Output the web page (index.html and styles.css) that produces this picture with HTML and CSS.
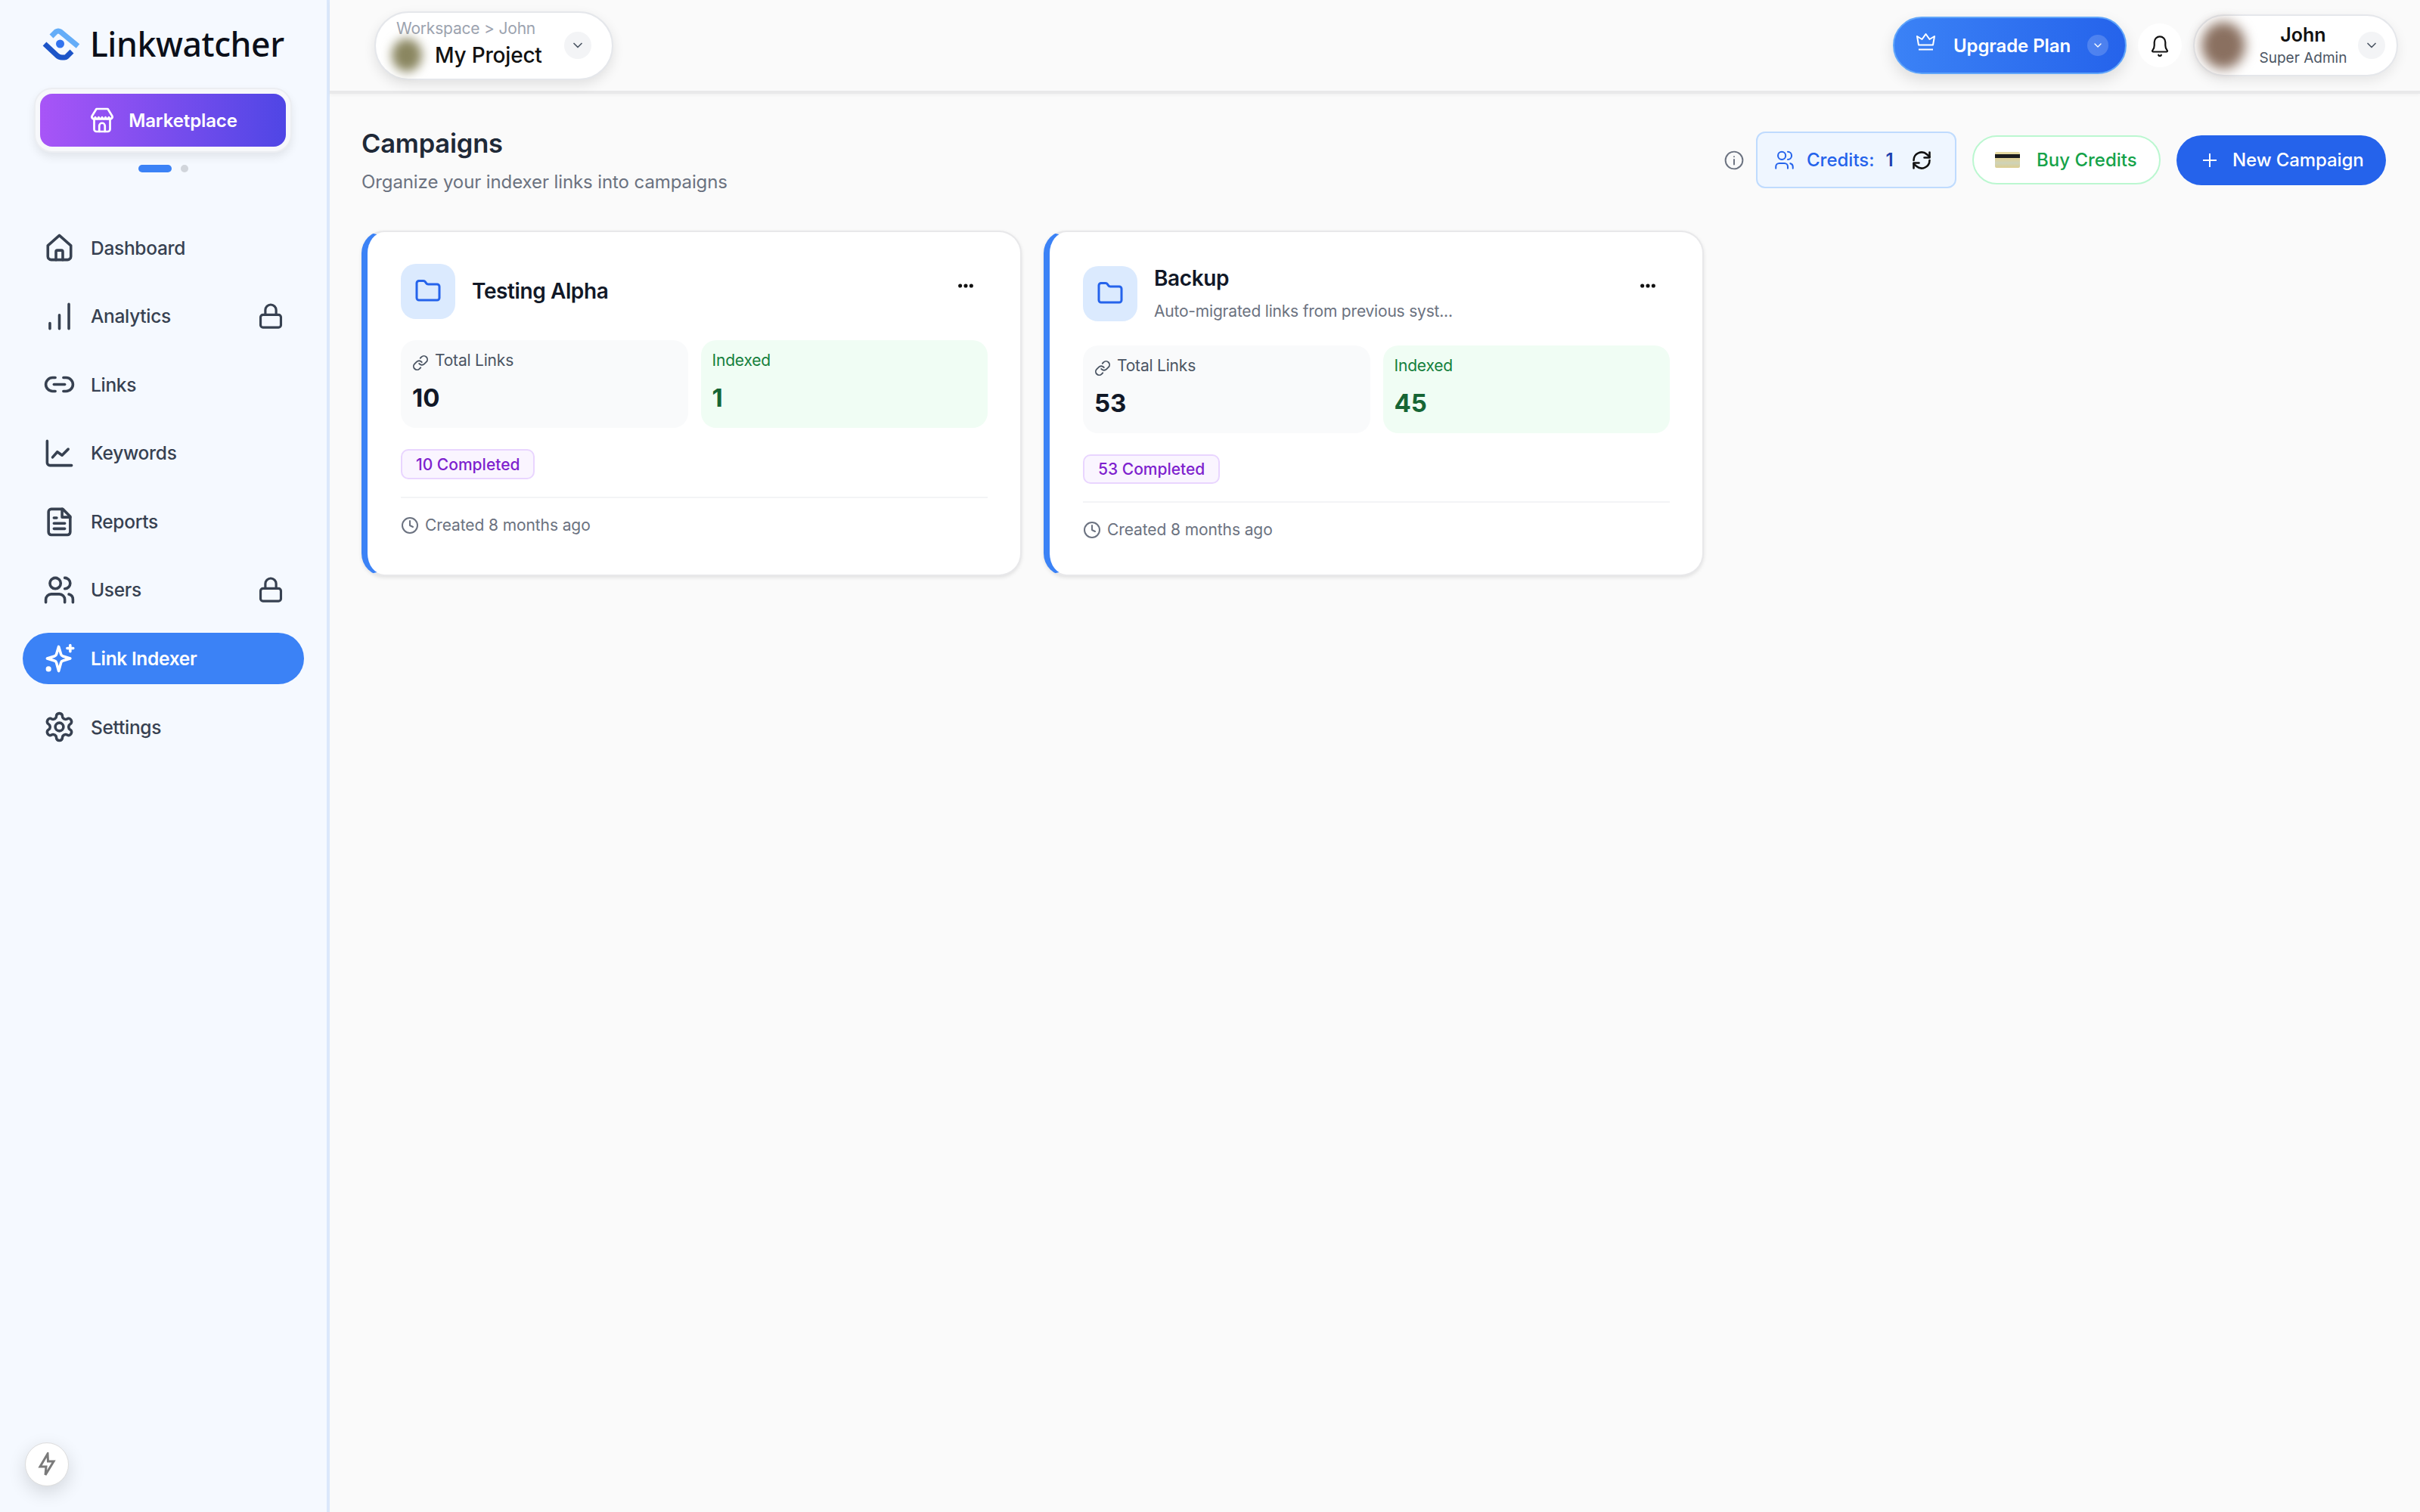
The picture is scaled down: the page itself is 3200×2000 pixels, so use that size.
FILE: index.html
```html
<!DOCTYPE html>
<html lang="en">
<head>
  <meta charset="utf-8">
  <title>Campaigns - Linkwatcher</title>
  <link rel="stylesheet" href="styles.css">
</head>
<body>
<svg class="defs" aria-hidden="true">
  <symbol id="i-chevron" viewBox="0 0 24 24"><path d="M6 9l6 6 6-6"/></symbol>
  <symbol id="i-lock" viewBox="0 0 24 24"><rect x="3.5" y="11" width="17" height="10.5" rx="2"/><path d="M7.5 11V7a4.5 4.5 0 0 1 9 0v4"/></symbol>
  <symbol id="i-folder" viewBox="0 0 24 24"><path d="M20 20a2 2 0 0 0 2-2V8a2 2 0 0 0-2-2h-7.9a2 2 0 0 1-1.69-.9L9.6 3.9A2 2 0 0 0 7.93 3H4a2 2 0 0 0-2 2v13a2 2 0 0 0 2 2z"/></symbol>
  <symbol id="i-link" viewBox="0 0 24 24"><path d="M10 13a5 5 0 0 0 7.54.54l3-3a5 5 0 0 0-7.07-7.07l-1.72 1.71"/><path d="M14 11a5 5 0 0 0-7.54-.54l-3 3a5 5 0 0 0 7.07 7.07l1.71-1.71"/></symbol>
  <symbol id="i-clock" viewBox="0 0 24 24"><circle cx="12" cy="12" r="10"/><path d="M12 6v6l4 2"/></symbol>
  <symbol id="i-dots" viewBox="0 0 24 8"><circle cx="4" cy="4" r="2.8"/><circle cx="12" cy="4" r="2.8"/><circle cx="20" cy="4" r="2.8"/></symbol>
</svg>

<div class="app">
  <aside class="sidebar">
    <div class="brand">
      <svg class="brand-logo" viewBox="0 0 50 44">
        <path class="logo-light" d="M12 12l6-6q3-2 6 0l23 19"/>
        <path class="logo-dark" d="M3 22l16 15q3 3 7 3h3q2 0 3-1l7-7"/>
        <circle class="logo-dot" cx="23.5" cy="22" r="5.5"/>
      </svg>
      <span class="brand-name">Linkwatcher</span>
    </div>

    <div class="market-ring">
      <a class="market-btn" href="#">
        <svg class="icon icon-market" viewBox="0 0 24 24">
          <path d="M7 2h10l4 6.5V9a2 2 0 0 1-2 2H5a2 2 0 0 1-2-2v-.5z"/>
          <path d="M3 9.5q1.5 2.5 3 0 1.5 2.5 3 0 1.5 2.5 3 0 1.5 2.5 3 0 1.5 2.5 3 0 1.5 2.5 3 0"/>
          <path d="M5 11v9a2 2 0 0 0 2 2h10a2 2 0 0 0 2-2v-9"/>
          <path d="M9.5 22v-5a2.5 2.5 0 0 1 5 0v5"/>
        </svg>
        Marketplace
      </a>
    </div>
    <div class="slide-dots"><span class="dot-on"></span><span class="dot-off"></span></div>

    <nav class="nav">
      <a class="nav-item" href="#">
        <svg class="icon" viewBox="0 0 24 24"><path d="M3.5 10.5L12 3l8.5 7.5v8a2.5 2.5 0 0 1-2.5 2.5H6a2.5 2.5 0 0 1-2.5-2.5z"/><path d="M9.5 21v-6a1 1 0 0 1 1-1h3a1 1 0 0 1 1 1v6"/></svg>
        <span>Dashboard</span>
      </a>
      <a class="nav-item" href="#">
        <svg class="icon" viewBox="0 0 24 24"><path d="M5 21v-4M12 21V11M19 21V3"/></svg>
        <span>Analytics</span>
        <svg class="icon nav-lock"><use href="#i-lock"/></svg>
      </a>
      <a class="nav-item" href="#">
        <svg class="icon" viewBox="0 0 24 24"><path d="M9 17H7A5 5 0 0 1 7 7h2"/><path d="M15 7h2a5 5 0 1 1 0 10h-2"/><path d="M8 12h8"/></svg>
        <span>Links</span>
      </a>
      <a class="nav-item" href="#">
        <svg class="icon" viewBox="0 0 24 24"><path d="M3 3v16a2 2 0 0 0 2 2h16"/><path d="M7 15l3.5-4 3.5 2.5 4.5-4.5"/></svg>
        <span>Keywords</span>
      </a>
      <a class="nav-item" href="#">
        <svg class="icon" viewBox="0 0 24 24"><path d="M14.5 3H6a2 2 0 0 0-2 2v15a2 2 0 0 0 2 2h12a2 2 0 0 0 2-2V8.5z"/><path d="M14 3v6h6"/><path d="M16 13.5H8M16 17.5H8M10 9.5H8"/></svg>
        <span>Reports</span>
      </a>
      <a class="nav-item" href="#">
        <svg class="icon" viewBox="0 0 24 24"><path d="M16 21v-2a4 4 0 0 0-4-4H6a4 4 0 0 0-4 4v2"/><circle cx="9" cy="7" r="4"/><path d="M22 21v-2a4 4 0 0 0-3-3.87"/><path d="M16 3a4 4 0 0 1 0 8"/></svg>
        <span>Users</span>
        <svg class="icon nav-lock"><use href="#i-lock"/></svg>
      </a>
      <a class="nav-item active" href="#">
        <svg class="icon" viewBox="0 0 24 24"><path d="M11.5 3l1.7 5.6a2 2 0 0 0 1.4 1.4l5.4 1.700-5.400 1.700a2 2 0 0 0-1.400 1.400L11.5 21l-1.700-6.200a2 2 0 0 0-1.400-1.400L3 11.700 8.400 10a2 2 0 0 0 1.400-1.400z"/><path d="M20 2v4.500M17.800 4.200h4.400"/><circle cx="4" cy="19.500" r="1"/></svg>
        <span>Link Indexer</span>
      </a>
      <a class="nav-item" href="#">
        <svg class="icon" viewBox="0 0 24 24"><path d="M12.220 2h-.44a2 2 0 0 0-2 2v.18a2 2 0 0 1-1 1.730l-.43.25a2 2 0 0 1-2 0l-.15-.08a2 2 0 0 0-2.730.73l-.22.38a2 2 0 0 0 .73 2.730l.15.1a2 2 0 0 1 1 1.720v.51a2 2 0 0 1-1 1.740l-.15.09a2 2 0 0 0-.73 2.730l.22.38a2 2 0 0 0 2.730.73l.15-.08a2 2 0 0 1 2 0l.43.25a2 2 0 0 1 1 1.730V20a2 2 0 0 0 2 2h.44a2 2 0 0 0 2-2v-.18a2 2 0 0 1 1-1.730l.43-.25a2 2 0 0 1 2 0l.15.08a2 2 0 0 0 2.730-.73l.22-.39a2 2 0 0 0-.73-2.730l-.15-.08a2 2 0 0 1-1-1.740v-.5a2 2 0 0 1 1-1.740l.15-.09a2 2 0 0 0 .73-2.730l-.22-.38a2 2 0 0 0-2.730-.73l-.15.08a2 2 0 0 1-2 0l-.43-.25a2 2 0 0 1-1-1.730V4a2 2 0 0 0-2-2z"/><circle cx="12" cy="12" r="3"/></svg>
        <span>Settings</span>
      </a>
    </nav>

    <button class="bolt-btn">
      <svg viewBox="0 0 24 32"><path d="M13 2L3 19h8l-1 11 11-18h-7.500z"/></svg>
    </button>
  </aside>

  <div class="main">
    <header class="topbar">
      <div class="workspace">
        <div class="workspace-info">
          <div class="workspace-path">Workspace &gt; John</div>
          <div class="workspace-row">
            <span class="workspace-avatar"></span>
            <span class="workspace-name">My Project</span>
          </div>
        </div>
        <span class="chev-circle"><svg class="chev"><use href="#i-chevron"/></svg></span>
      </div>

      <div class="top-right">
        <button class="upgrade">
          <svg class="crown" viewBox="0 0 27 25"><path d="M13.500 2l5 7 6.500-4-2 11.500H4L2 5l6.500 4z"/><path d="M4 22.500h19"/></svg>
          <span>Upgrade Plan</span>
          <span class="upgrade-chev"><svg class="chev"><use href="#i-chevron"/></svg></span>
        </button>
        <button class="bell">
          <svg viewBox="0 0 24 28"><path d="M4 19.500c1.500-1.500 2-3 2-5.500v-3.500a6 6 0 0 1 12 0V14c0 2.500.5 4 2 5.500.5.700 0 1.500-.8 1.500H4.800c-.8 0-1.300-.8-.8-1.500z"/><path d="M10.500 24.500a1.600 1.600 0 0 0 3 0"/></svg>
        </button>
        <div class="user">
          <span class="user-avatar"></span>
          <div class="user-info">
            <div class="user-name">John</div>
            <div class="user-role">Super Admin</div>
          </div>
          <span class="chev-circle"><svg class="chev"><use href="#i-chevron"/></svg></span>
        </div>
      </div>
    </header>

    <main class="content">
      <div class="page-head">
        <div>
          <h1 class="page-title">Campaigns</h1>
          <p class="page-sub">Organize your indexer links into campaigns</p>
        </div>
        <div class="actions">
          <svg class="info" viewBox="0 0 24 24"><circle cx="12" cy="12" r="10.500"/><path d="M12 11v6M12 7.500v.1"/></svg>
          <div class="credits">
            <svg class="credits-users" viewBox="0 0 24 24"><path d="M16 22v-2a4 4 0 0 0-4-4H6a4 4 0 0 0-4 4v2"/><circle cx="9" cy="7" r="4.500"/><path d="M22 22v-2a4 4 0 0 0-3-3.870"/><path d="M16 2.500a4.500 4.500 0 0 1 0 9"/></svg>
            <span class="credits-label">Credits:</span>
            <span class="credits-num">1</span>
            <svg class="refresh" viewBox="0 0 24 24"><path d="M21 3v6h-6"/><path d="M3 12a9 9 0 0 1 15-6.700L21 8"/><path d="M3 21v-6h6"/><path d="M21 12a9 9 0 0 1-15 6.700L3 16"/></svg>
          </div>
          <button class="buy"><span class="card-pic"></span>Buy Credits</button>
          <button class="new-campaign">
            <svg viewBox="0 0 20 20"><path d="M10 1v18M1 10h18"/></svg>
            New Campaign
          </button>
        </div>
      </div>

      <div class="cards">
        <article class="card">
          <div class="card-head">
            <span class="folder"><svg><use href="#i-folder"/></svg></span>
            <div class="card-text"><h2 class="card-title">Testing Alpha</h2></div>
            <button class="more"><svg><use href="#i-dots"/></svg></button>
          </div>
          <div class="stats">
            <div class="stat">
              <div class="stat-label"><svg class="stat-link"><use href="#i-link"/></svg>Total Links</div>
              <div class="stat-value">10</div>
            </div>
            <div class="stat stat-green">
              <div class="stat-label">Indexed</div>
              <div class="stat-value">1</div>
            </div>
          </div>
          <span class="badge">10 Completed</span>
          <div class="card-foot"><svg class="clock"><use href="#i-clock"/></svg>Created 8 months ago</div>
        </article>

        <article class="card">
          <div class="card-head">
            <span class="folder"><svg><use href="#i-folder"/></svg></span>
            <div class="card-text">
              <h2 class="card-title">Backup</h2>
              <p class="card-desc">Auto-migrated links from previous syst...</p>
            </div>
            <button class="more"><svg><use href="#i-dots"/></svg></button>
          </div>
          <div class="stats">
            <div class="stat">
              <div class="stat-label"><svg class="stat-link"><use href="#i-link"/></svg>Total Links</div>
              <div class="stat-value">53</div>
            </div>
            <div class="stat stat-green">
              <div class="stat-label">Indexed</div>
              <div class="stat-value">45</div>
            </div>
          </div>
          <span class="badge">53 Completed</span>
          <div class="card-foot"><svg class="clock"><use href="#i-clock"/></svg>Created 8 months ago</div>
        </article>
      </div>
    </main>
  </div>
</div>
</body>
</html>
```

FILE: styles.css
```css
* { box-sizing: border-box; }
html, body { margin: 0; padding: 0; }
body {
  font-family: "Inter", "Liberation Sans", sans-serif;
  color: #111827;
  background: #fafafa;
}
a { text-decoration: none; color: inherit; }
h1, h2, p { margin: 0; }
button { font: inherit; border: 0; padding: 0; background: none; }
.defs { display: none; }

.app { display: flex; width: 3200px; height: 2000px; overflow: hidden; }

/* icons */
.icon {
  width: 36px;
  height: 36px;
  flex: none;
  fill: none;
  stroke: currentColor;
  stroke-width: 2;
  stroke-linecap: round;
  stroke-linejoin: round;
}
.chev { width: 20px; height: 20px; fill: none; stroke: #4b5563; stroke-width: 2; stroke-linecap: round; stroke-linejoin: round; }
.chev-circle {
  width: 36px;
  height: 36px;
  flex: none;
  display: flex;
  align-items: center;
  justify-content: center;
  border-radius: 50%;
  background: #f3f4f6;
}

/* sidebar */
.sidebar {
  width: 436px;
  flex: none;
  display: flex;
  flex-direction: column;
  padding: 36px 30px 34px;
  background: #f5f9ff;
  border-right: 4px solid #dbe8fb;
}
.brand { display: flex; align-items: center; gap: 13px; height: 44px; margin: 0 0 36px 26px; }
.brand-logo { width: 50px; height: 44px; flex: none; fill: none; stroke-linecap: butt; stroke-linejoin: round; }
.logo-light { stroke: #64adf8; stroke-width: 7; }
.logo-dark { stroke: #1d55c8; stroke-width: 7; }
.logo-dot { fill: #3273ee; }
.brand-name { font-family: "Noto Sans", sans-serif; font-size: 44.5px; font-weight: 500; letter-spacing: -0.4px; color: #0b0f19; line-height: 44px; }

.market-ring {
  height: 86px;
  margin: 0 16px 0 15px;
  padding: 6px;
  border: 2px solid #eceef2;
  border-radius: 24px;
  background: #f7f8fb;
  box-shadow: 0 6px 12px rgba(0, 0, 0, 0.08);
}
.market-btn {
  height: 70px;
  display: flex;
  align-items: center;
  justify-content: center;
  gap: 17px;
  border-radius: 16px;
  background: linear-gradient(90deg, #a855f7, #4f46e5);
  color: #fff;
  font-size: 24px;
  letter-spacing: -0.1px;
  font-weight: 600;
}
.icon-market { width: 36px; height: 36px; stroke-width: 1.8; }

.slide-dots { display: flex; justify-content: center; gap: 12px; margin-top: 16px; height: 10px; }
.dot-on { width: 44px; height: 10px; border-radius: 5px; background: #3b82f6; }
.dot-off { width: 10px; height: 10px; border-radius: 50%; background: #d1d5db; }

.nav { display: flex; flex-direction: column; gap: 22.6px; margin-top: 65.5px; }
.nav-item {
  height: 68px;
  display: flex;
  align-items: center;
  gap: 24px;
  padding: 0 30px;
  border-radius: 34px;
  color: #374151;
  font-size: 24.5px;
  letter-spacing: -0.3px;
  font-weight: 500;
}
.nav-item > .icon { width: 43px; height: 43px; margin: 0 -3.5px; }
.nav-item > .nav-lock { width: 38px; height: 38px; margin: 0 -5px 0 auto; }
.nav-item.active { background: #3b82f6; color: #fff; font-weight: 600; }

.bolt-btn {
  width: 58px;
  height: 58px;
  margin: auto 0 0 3px;
  display: flex;
  align-items: center;
  justify-content: center;
  border-radius: 50%;
  background: #fff;
  border: 1px solid #ddd;
  box-shadow: 0 8px 24px rgba(0, 0, 0, 0.14);
}
.bolt-btn svg { width: 24px; height: 32px; fill: none; stroke: #7a7a7a; stroke-width: 3; }

/* top bar */
.main { flex: 1; min-width: 0; display: flex; flex-direction: column; }
.topbar {
  height: 124px;
  flex: none;
  display: flex;
  align-items: center;
  padding: 0 29px 0 59px;
  background: #fafafa;
  border-bottom: 4px solid #e9e9ea;
  box-shadow: 0 2px 4px rgba(0, 0, 0, 0.04);
}
.workspace {
  width: 316px;
  height: 91px;
  display: flex;
  align-items: center;
  padding: 0 27px 0 19px;
  background: #fff;
  border: 2px solid #e5e7eb;
  border-radius: 46px;
  box-shadow: 0 6px 16px rgba(0, 0, 0, 0.1);
}
.workspace-info { align-self: flex-start; padding-top: 8px; }
.workspace-path { margin-left: 8px; font-size: 21px; letter-spacing: -0.2px; line-height: 26px; color: #9ca3af; white-space: nowrap; }
.workspace-row { display: flex; align-items: center; gap: 17px; height: 44px; }
.workspace-avatar { width: 40px; height: 44px; margin-left: 2px; border-radius: 50%; background: #8a8660; filter: blur(7px); }
.workspace-name { font-size: 28px; letter-spacing: -0.2px; font-weight: 500; color: #111; white-space: nowrap; }
.workspace .chev-circle { margin-left: auto; }

.top-right { margin-left: auto; display: flex; align-items: center; gap: 15px; }
.upgrade {
  width: 309px;
  height: 76px;
  display: flex;
  align-items: center;
  padding: 0 22px 0 28px;
  border: 2px solid #60a5fa;
  border-radius: 38px;
  background: linear-gradient(90deg, #3b82f6, #2563eb);
  color: #fff;
  font-size: 24px;
  letter-spacing: -0.1px;
  font-weight: 600;
  box-shadow: 0 8px 20px rgba(0, 0, 0, 0.12);
}
.crown { width: 27px; height: 25px; margin: -10px 23px 0 0; fill: none; stroke: #fff; stroke-width: 2; stroke-linejoin: round; }
.upgrade-chev {
  width: 28px;
  height: 28px;
  margin-left: auto;
  display: flex;
  align-items: center;
  justify-content: center;
  border-radius: 50%;
  background: rgba(255, 255, 255, 0.18);
}
.upgrade-chev .chev { width: 16px; height: 16px; stroke: #fff; }
.bell {
  width: 58px;
  height: 58px;
  display: flex;
  align-items: center;
  justify-content: center;
  border-radius: 50%;
  background: #fff;
}
.bell svg { width: 30px; height: 34px; fill: none; stroke: #111; stroke-width: 1.8; stroke-linecap: round; stroke-linejoin: round; }
.user {
  width: 271px;
  height: 82px;
  display: flex;
  align-items: center;
  padding: 0 15px 0 9px;
  background: #fff;
  border: 2px solid #e5e7eb;
  border-radius: 41px;
  box-shadow: 0 6px 16px rgba(0, 0, 0, 0.08);
}
.user-avatar { width: 58px; height: 62px; flex: none; border-radius: 50%; background: #8a7060; filter: blur(8px); }
.user-info { flex: 1; padding-left: 4px; text-align: center; }
.user-name { font-size: 25px; font-weight: 600; line-height: 34px; color: #111; }
.user-role { font-size: 19px; line-height: 28px; color: #4b5563; }

/* page */
.content { padding: 44px 45px 0 42px; }
.page-head { display: flex; align-items: center; justify-content: space-between; margin-bottom: 46px; }
.page-title { font-size: 34.5px; letter-spacing: -0.2px; font-weight: 600; line-height: 44px; color: #1f2937; }
.page-sub { margin-top: 11px; font-size: 24px; letter-spacing: -0.1px; line-height: 36px; color: #6b7280; }

.actions { display: flex; align-items: center; gap: 21px; padding-bottom: 4px; }
.info { width: 26px; height: 26px; margin-right: -5px; fill: none; stroke: #6b7280; stroke-width: 1.8; stroke-linecap: round; }
.credits {
  width: 265px;
  height: 75px;
  display: flex;
  align-items: center;
  padding-left: 22px;
  background: #eff6ff;
  border: 2px solid #bfdbfe;
  border-radius: 12px;
  font-size: 24px;
  font-weight: 500;
}
.credits-users { width: 27px; height: 27px; margin-right: 16px; fill: none; stroke: #2563eb; stroke-width: 1.8; stroke-linecap: round; }
.credits-label { color: #2563eb; }
.credits-num { margin-left: 15px; color: #1e40af; font-weight: 600; }
.refresh { width: 28px; height: 28px; margin-left: 23px; fill: none; stroke: #111; stroke-width: 2.2; stroke-linecap: round; stroke-linejoin: round; }
.buy {
  width: 249px;
  height: 65px;
  display: flex;
  align-items: center;
  gap: 22px;
  padding-left: 28px;
  background: #fff;
  border: 2px solid #bbf7d0;
  border-radius: 33px;
  color: #16a34a;
  font-size: 24px;
  font-weight: 500;
}
.card-pic {
  width: 33px;
  height: 21px;
  flex: none;
  border-radius: 2px;
  background: linear-gradient(180deg, #e6d9a0 0, #e6d9a0 15%, #1c1c1c 15%, #1c1c1c 40%, #dfd094 40%, #cfd3b8 70%, #dccd90 100%);
}
.new-campaign {
  width: 277px;
  height: 66px;
  display: flex;
  align-items: center;
  gap: 20px;
  padding-left: 34px;
  background: #2563eb;
  border-radius: 33px;
  color: #fff;
  font-size: 24px;
  letter-spacing: -0.1px;
  font-weight: 500;
}
.new-campaign svg { width: 20px; height: 20px; flex: none; fill: none; stroke: #fff; stroke-width: 2; }

/* campaign cards */
.cards { display: grid; grid-template-columns: repeat(3, 1fr); gap: 29px; }
.card {
  height: 457px;
  display: flex;
  flex-direction: column;
  padding: 41px 43px 44px 44px;
  background: #fff;
  border: 2px solid #e8e8ea;
  border-left: 8px solid #3b82f6;
  border-radius: 30px;
  box-shadow: 0 2px 5px rgba(0, 0, 0, 0.1);
}
.card-head { display: flex; align-items: center; gap: 22px; min-height: 74px; margin-bottom: 28px; }
.folder {
  width: 72px;
  height: 73px;
  flex: none;
  display: flex;
  align-items: center;
  justify-content: center;
  border-radius: 20px;
  background: #dbeafe;
}
.folder svg { width: 36px; height: 36px; fill: none; stroke: #2563eb; stroke-width: 2; stroke-linejoin: round; }
.card-text { min-width: 0; }
.card-title { font-size: 28px; letter-spacing: -0.4px; font-weight: 600; line-height: 42px; color: #111827; }
.card-desc { margin-top: 6px; font-size: 21px; letter-spacing: -0.2px; line-height: 34px; color: #6b7280; white-space: nowrap; }
.more { width: 22px; height: 60px; margin: 0 18px 0 auto; align-self: flex-start; display: flex; align-items: center; }
.more svg { width: 22px; height: 8px; fill: #111; }

.stats { display: grid; grid-template-columns: 1fr 1fr; gap: 17px; margin-bottom: 28px; }
.stat { height: 116px; padding: 12px 15px 0; background: #f9fafb; border-radius: 20px; }
.stat-label { display: flex; align-items: center; gap: 8px; font-size: 21px; letter-spacing: -0.2px; line-height: 30px; color: #4b5563; }
.stat-link { width: 22px; height: 22px; margin-top: 6px; fill: none; stroke: #4b5563; stroke-width: 2; stroke-linecap: round; stroke-linejoin: round; }
.stat-value { margin-top: 14px; font-size: 33px; font-weight: 700; line-height: 40px; color: #111827; }
.stat-green { background: #f0fdf4; }
.stat-green .stat-label { color: #15803d; }
.stat-green .stat-value { color: #166534; }

.badge {
  align-self: flex-start;
  height: 40px;
  display: flex;
  align-items: center;
  padding: 0 18px;
  background: #faf5ff;
  border: 2px solid #e9d5ff;
  border-radius: 10px;
  color: #7e22ce;
  font-size: 21px;
  font-weight: 500;
}
.card-foot {
  display: flex;
  align-items: center;
  gap: 8px;
  margin-top: 23px;
  padding-top: 21px;
  border-top: 2px solid #f3f4f6;
  font-size: 21px;
  letter-spacing: -0.1px;
  line-height: 30px;
  color: #6b7280;
}
.clock { width: 24px; height: 24px; flex: none; fill: none; stroke: #6b7280; stroke-width: 2; stroke-linecap: round; stroke-linejoin: round; }
```
